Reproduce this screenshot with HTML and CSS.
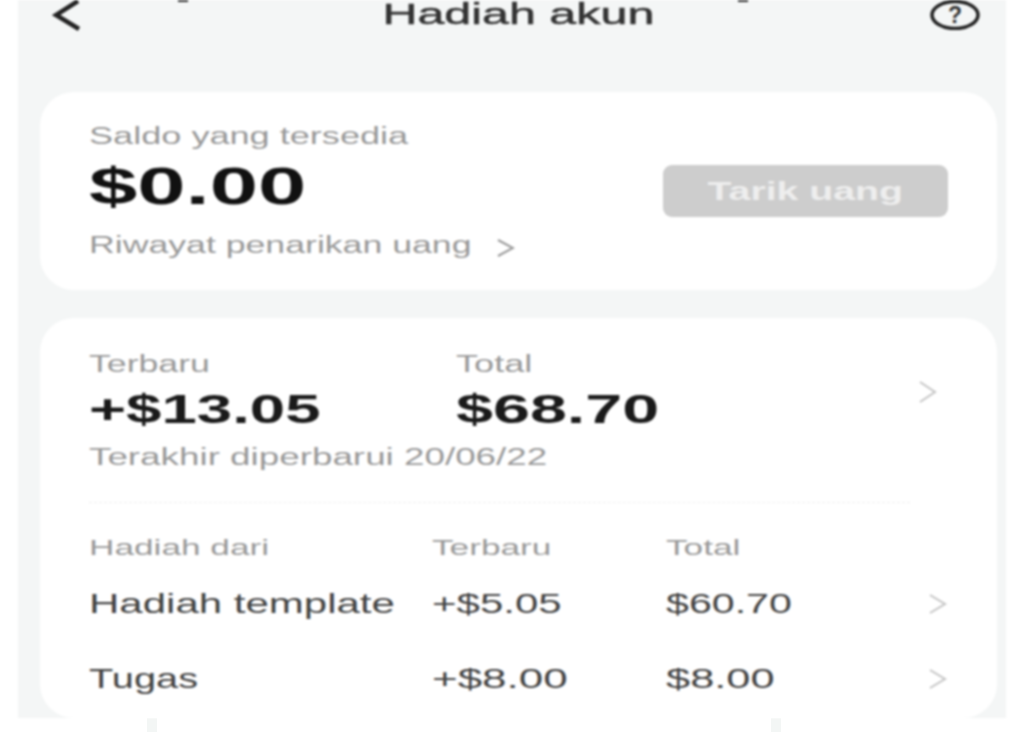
FILE: index.html
```html
<!DOCTYPE html>
<html lang="id">
<head>
  <meta charset="UTF-8"/>
  <title>Hadiah akun</title>
  <link rel="stylesheet" href="styles.css">
</head>
<body>
  <div class="screen">
    <span class="top-tick tick-left"></span>
    <span class="top-tick tick-right"></span>

    <div class="top-nav">
      <svg class="back-icon" width="30" height="32" viewBox="0 0 30 32"><path d="M26 1 L4 15 L27 29" fill="none" stroke="#222" stroke-width="4.5"/></svg>
      <h1><span class="wide s167">Hadiah akun</span></h1>
      <svg class="help-icon" width="50" height="30" viewBox="0 0 50 30"><ellipse cx="25" cy="15" rx="23" ry="13.5" fill="none" stroke="#222" stroke-width="3.5"/><text x="25" y="23" text-anchor="middle" class="help-mark">?</text></svg>
    </div>

    <!-- Saldo -->
    <div class="card balance-card">
      <div class="balance-info">
        <div class="label"><span class="wide s157">Saldo yang tersedia</span></div>
        <div class="amount"><span class="wide s167">$0.00</span></div>
        <a href="#" class="history-link">
          <span class="history-text"><span class="wide s155">Riwayat penarikan uang</span></span>
          <svg width="18" height="20" viewBox="0 0 18 20"><path d="M1 2 L16 10 L1 18" fill="none" stroke="#999" stroke-width="2"/></svg>
        </a>
      </div>
      <button class="withdraw-btn"><span class="wide s157">Tarik uang</span></button>
    </div>

    <!-- Hadiah -->
    <div class="card reward-card">
      <div class="summary-cols">
        <div class="summary-col latest">
          <div class="label"><span class="wide s155">Terbaru</span></div>
          <div class="amount-md"><span class="wide s155">+$13.05</span></div>
        </div>
        <div class="summary-col">
          <div class="label"><span class="wide s157">Total</span></div>
          <div class="amount-md"><span class="wide s162">$68.70</span></div>
        </div>
        <svg class="row-chev big" width="18" height="24" viewBox="0 0 18 24"><path d="M1 2 L16 12 L1 22" fill="none" stroke="#c4c4c4" stroke-width="2"/></svg>
      </div>
      <div class="updated"><span class="wide s160">Terakhir diperbarui 20/06/22</span></div>
      <div class="divider"></div>

      <div class="table-head row">
        <span class="col-name"><span class="wide s160">Hadiah dari</span></span>
        <span class="col-latest"><span class="wide s160">Terbaru</span></span>
        <span class="col-total"><span class="wide s160">Total</span></span>
      </div>
      <div class="row item">
        <span class="col-name"><span class="wide s150">Hadiah template</span></span>
        <span class="col-latest"><span class="wide s150">+$5.05</span></span>
        <span class="col-total"><span class="wide s147">$60.70</span></span>
        <svg class="row-chev" width="18" height="22" viewBox="0 0 18 22"><path d="M1 2 L16 11 L1 20" fill="none" stroke="#c4c4c4" stroke-width="2"/></svg>
      </div>
      <div class="row item">
        <span class="col-name"><span class="wide s142">Tugas</span></span>
        <span class="col-latest"><span class="wide s157">+$8.00</span></span>
        <span class="col-total"><span class="wide s155">$8.00</span></span>
        <svg class="row-chev" width="18" height="22" viewBox="0 0 18 22"><path d="M1 2 L16 11 L1 20" fill="none" stroke="#c4c4c4" stroke-width="2"/></svg>
      </div>
    </div>
  </div>

  <div class="bottom-strip">
    <span class="bottom-tick"></span>
    <span class="bottom-tick"></span>
  </div>
</body>
</html>
```

FILE: styles.css
```css
* { box-sizing: border-box; margin: 0; padding: 0; }
html, body { height: 732px; overflow: hidden; background: #fff; }
body { font-family: "Liberation Sans", sans-serif; color: #333; }

/* the source image is stretched sideways and soft */
.wide {
  display: inline-block;
  white-space: nowrap;
  transform-origin: left center;
}
.s142 { transform: scaleX(1.42); }
.s147 { transform: scaleX(1.47); }
.s150 { transform: scaleX(1.5); }
.s155 { transform: scaleX(1.55); }
.s157 { transform: scaleX(1.57); }
.s160 { transform: scaleX(1.6); }
.s162 { transform: scaleX(1.62); }
.s167 { transform: scaleX(1.67); }

.screen {
  position: relative;
  width: 988px;
  height: 718px;
  margin-left: 18px;
  background: #f4f6f6;
  display: flex;
  flex-direction: column;
  filter: blur(0.8px);
}
.top-tick {
  position: absolute;
  top: 0;
  width: 10px;
  height: 2px;
  background: #333;
}
.tick-left { left: 160px; }
.tick-right { left: 720px; }

.top-nav {
  height: 92px;
  flex: none;
  padding: 0 26px 0 34px;
  display: flex;
  justify-content: space-between;
  align-items: flex-start;
}
.top-nav h1 {
  margin-left: 25px;
  font-size: 29px;
  font-weight: 400;
  line-height: 28px;
  color: #333;
  -webkit-text-stroke: 0.5px #333;
}
.top-nav h1 .wide { transform-origin: center; }
.help-mark { font-family: "Liberation Sans", sans-serif; font-size: 23px; font-weight: 700; fill: #333; }

.card {
  background: #fff;
  border-radius: 34px;
  margin: 0 9px 0 22px;
}
.balance-card {
  height: 198px;
  flex: none;
  margin-bottom: 28px;
  padding: 30px 49px 0 49px;
  display: flex;
  justify-content: space-between;
  align-items: flex-start;
}
.label {
  font-size: 23px;
  line-height: 28px;
  color: #999;
}
.amount {
  margin-top: 5px;
  font-size: 52px;
  font-weight: 700;
  line-height: 62px;
  color: #111;
}
.history-link {
  display: flex;
  align-items: center;
  margin-top: 13px;
  font-size: 23px;
  line-height: 30px;
  color: #999;
  text-decoration: none;
}
.history-text { width: 408px; }
.history-link svg { margin-top: 6px; }
.withdraw-btn {
  width: 285px;
  height: 52px;
  margin-top: 43px;
  border: none;
  border-radius: 9px;
  background: #cdcdcd;
  color: #eee;
  font-family: inherit;
  font-size: 25px;
  font-weight: 700;
}
.withdraw-btn .wide { transform-origin: center; }

.reward-card {
  flex: 1;
  padding: 32px 60px 0 49px;
}
.summary-cols {
  display: flex;
  align-items: center;
}
.summary-col { flex: none; }
.summary-col.latest { width: 367px; }
.amount-md {
  margin-top: 7px;
  font-size: 41px;
  font-weight: 700;
  line-height: 48px;
  color: #1a1a1a;
}
.row-chev { margin-left: auto; flex: none; }
.updated {
  margin-top: 9px;
  font-size: 23px;
  line-height: 30px;
  color: #999;
}
.divider {
  margin: 30px 27px 0 0;
  border-bottom: 1px dashed #eee;
}

.row {
  display: flex;
  align-items: center;
}
.col-name { width: 343px; }
.col-latest { width: 234px; }
.table-head {
  margin-top: 31px;
  margin-bottom: 4px;
  font-size: 22px;
  line-height: 28px;
  color: #999;
}
.item {
  height: 75px;
  font-size: 28px;
  color: #444;
}
.item .row-chev { margin-right: -10px; }

.bottom-strip {
  height: 14px;
  padding-left: 147px;
  display: flex;
  gap: 614px;
}
.bottom-tick {
  width: 10px;
  background: #f3f6f5;
}
```
